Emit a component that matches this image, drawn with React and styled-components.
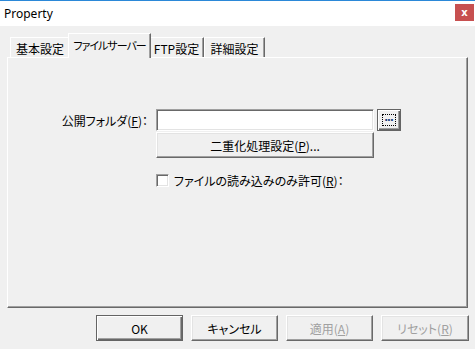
import styled, { createGlobalStyle, css } from 'styled-components'

const GlobalStyle = createGlobalStyle`
  html, body { margin: 0; padding: 0; background: #f0f0f0; }
  body {
    font-family: "Noto Sans CJK JP", "Liberation Sans", sans-serif;
    font-size: 12px;
    color: #000;
  }
`

const jp = css`
  font-family: "Noto Sans CJK JP", "Liberation Sans", sans-serif;
  font-feature-settings: "palt";
  font-size: 12px;
`

const Window = styled.div`
  width: 475px;
  height: 349px;
  display: flex;
  flex-direction: column;
  background: #f0f0f0;
  overflow: hidden;
`

const TitleBar = styled.div`
  height: 25px;
  border-top: 1px solid #2b88d8;
  background: #fff;
  display: flex;
  align-items: center;
  justify-content: space-between;
  padding: 0 1px 0 4px;
`

const Title = styled.span`
  font-family: "Noto Sans", "Liberation Sans", sans-serif;
  font-size: 12px;
  color: #000;
`

const CloseBtn = styled.div`
  width: 19px;
  height: 17px;
  margin-top: -3px;
  background: #c75050;
  color: #fff;
  font-family: "DejaVu Sans", sans-serif;
  font-weight: bold;
  font-size: 10px;
  display: flex;
  align-items: center;
  justify-content: center;
`

const Body = styled.div`
  flex: 1;
  display: flex;
  flex-direction: column;
  padding: 7px 7px 8px 7px;
`

const TabStrip = styled.div`
  height: 24px;
  display: flex;
  align-items: flex-end;
  padding-left: 3px;
`

const Tab = styled.div`
  ${jp}
  position: relative;
  box-sizing: border-box;
  width: ${p => p.$w}px;
  height: 20px;
  display: flex;
  align-items: center;
  justify-content: center;
  padding-top: 1px;
  background: #f0f0f0;
  border-top: 1px solid #fff;
  border-left: 1px solid #fff;
  border-right: 1px solid #696969;
  box-shadow: inset -1px 0 #a0a0a0;
  white-space: nowrap;
  ${p => p.$tight && css`
    font-size: 11px;
    letter-spacing: -1px;
  `}
  ${p => p.$active && css`
    width: ${p.$w + 4}px;
    height: 25px;
    margin: 0 -2px -1px -2px;
    padding: 0 0 3px 0;
    z-index: 2;
  `}
`

const Panel = styled.div`
  height: 251px;
  box-sizing: border-box;
  border-top: 1px solid #fff;
  border-left: 1px solid #fff;
  border-right: 1px solid #696969;
  border-bottom: 1px solid #696969;
  box-shadow: inset -1px -1px #a0a0a0;
  padding-top: 51px;
`

const Form = styled.div`
  display: grid;
  grid-template-columns: 148px 218px 27px;
  align-items: center;
`

const Label = styled.label`
  ${jp}
  text-align: right;
  padding-right: 8px;
  white-space: nowrap;
`

const Mn = styled.u`
  text-decoration: underline;
  text-underline-offset: 1px;
`

const TextField = styled.div`
  height: 22px;
  box-sizing: border-box;
  background: #fff;
  border: 1px solid;
  border-color: #a0a0a0 #fff #fff #a0a0a0;
  box-shadow: inset 1px 1px #696969, inset -1px -1px #e3e3e3;
`

const raised = css`
  border: 1px solid;
  border-color: #fff #696969 #696969 #fff;
  box-shadow: inset -1px -1px #a0a0a0, inset 1px 1px #e3e3e3;
`

const defaultRaised = css`
  border: 1px solid #646464;
  box-shadow: inset 1px 1px #fff, inset -1px -1px #696969, inset -2px -2px #a0a0a0;
`

const Button = styled.div`
  ${jp}
  box-sizing: border-box;
  height: ${p => p.$h || 26}px;
  width: ${p => (p.$w ? `${p.$w}px` : 'auto')};
  display: flex;
  align-items: center;
  justify-content: center;
  background: #f0f0f0;
  color: ${p => (p.$disabled ? '#a0a0a0' : '#000')};
  white-space: nowrap;
  ${p => (p.$default ? defaultRaised : raised)}
`

const Browse = styled(Button)`
  margin-left: 3px;
  position: relative;
  font-family: "DejaVu Sans", sans-serif;
  font-size: 10px;
  font-weight: bold;
  line-height: 10px;
  letter-spacing: -1px;
  padding: 0 1px 4px 0;
  color: #1d3f7a;
`

const FocusRing = styled.span`
  position: absolute;
  inset: 4px;
  border: 1px dotted #000;
`

const DupButton = styled(Button)`
  grid-column: 2;
  margin-top: 1px;
`

const CheckRow = styled.div`
  ${jp}
  grid-column: 2 / 4;
  display: flex;
  align-items: center;
  gap: 5px;
  margin-top: 14px;
  white-space: nowrap;
`

const CheckBox = styled.span`
  width: 13px;
  height: 13px;
  box-sizing: border-box;
  background: #fff;
  border: 1px solid;
  border-color: #a0a0a0 #fff #fff #a0a0a0;
  box-shadow: inset 1px 1px #696969, inset -1px -1px #e3e3e3;
`

const ButtonRow = styled.div`
  display: flex;
  justify-content: flex-end;
  gap: 8px;
  margin-top: 7px;
  margin-right: -1px;
`

const tabs = [
  { label: '基本設定', w: 60 },
  { label: 'ファイルサーバー', w: 79, active: true, tight: true },
  { label: 'FTP設定', w: 55 },
  { label: '詳細設定', w: 61 },
]

export default function App() {
  return (
    <>
      <GlobalStyle />
      <Window>
        <TitleBar>
          <Title>Property</Title>
          <CloseBtn>x</CloseBtn>
        </TitleBar>
        <Body>
          <TabStrip>
            {tabs.map(t => (
              <Tab key={t.label} $w={t.w} $active={t.active} $tight={t.tight}>{t.label}</Tab>
            ))}
          </TabStrip>
          <Panel>
            <Form>
              <Label>公開フォルダ(<Mn>F</Mn>)：</Label>
              <TextField />
              <Browse $default $h={22} $w={24}>
                <FocusRing />
                ...
              </Browse>
              <DupButton>二重化処理設定(<Mn>P</Mn>)...</DupButton>
              <CheckRow>
                <CheckBox />
                <span>ファイルの読み込みのみ許可(<Mn>R</Mn>)：</span>
              </CheckRow>
            </Form>
          </Panel>
          <ButtonRow>
            <Button $default $w={87}>OK</Button>
            <Button $w={87}>キャンセル</Button>
            <Button $w={87} $disabled>適用(<Mn>A</Mn>)</Button>
            <Button $w={88} $disabled>リセット(<Mn>R</Mn>)</Button>
          </ButtonRow>
        </Body>
      </Window>
    </>
  )
}
